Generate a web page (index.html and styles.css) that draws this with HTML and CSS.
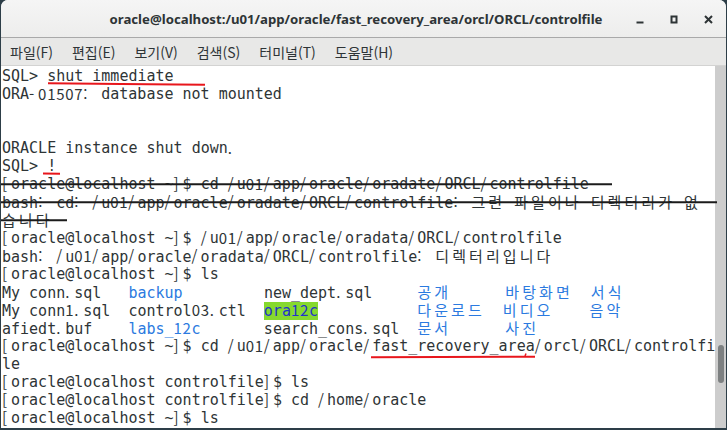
FILE: index.html
```html
<!DOCTYPE html>
<html lang="ko">
<head>
<meta charset="utf-8">
<title>oracle@localhost</title>
<link rel="stylesheet" href="styles.css">
</head>
<body>
<div class="window">
  <div class="titlebar">
    <div class="title">oracle@localhost:/u01/app/oracle/fast_recovery_area/orcl/ORCL/controlfile</div>
    <div class="controls">
      <div class="ctl"><svg width="16" height="16" viewBox="0 0 16 16"><rect x="4.5" y="10.5" width="7" height="2" fill="#2e3436"/></svg></div>
      <div class="ctl"><svg width="16" height="16" viewBox="0 0 16 16"><rect x="5.5" y="5.5" width="5" height="6" fill="none" stroke="#2e3436" stroke-width="2"/></svg></div>
      <div class="ctl"><svg width="16" height="16" viewBox="0 0 16 16"><path d="M5 5 L12 12 M12 5 L5 12" stroke="#2e3436" stroke-width="2" fill="none"/></svg></div>
    </div>
  </div>
  <div class="menubar">
    <span class="menu">파일(F)</span>
    <span class="menu">편집(E)</span>
    <span class="menu">보기(V)</span>
    <span class="menu">검색(S)</span>
    <span class="menu">터미널(T)</span>
    <span class="menu">도움말(H)</span>
  </div>
  <div class="main">
    <div class="term">
      <div class="line">SQL&gt; shut immediate</div>
      <div class="line">ORA<span class="c">-</span><span class="c">0</span><span class="c">1</span><span class="c">5</span><span class="c">0</span><span class="c">7</span><span class="c">:</span> database not mounted</div>
      <div class="line"></div>
      <div class="line"></div>
      <div class="line">ORACLE instance shut down<span class="c">.</span></div>
      <div class="line">SQL&gt; !</div>
      <div class="line"><span class="c">[</span>oracle@localhost ~<span class="c">]</span>$ cd <span class="c">/</span>u<span class="c">0</span><span class="c">1</span><span class="c">/</span>app<span class="c">/</span>oracle<span class="c">/</span>oradate<span class="c">/</span>ORCL<span class="c">/</span>controlfile</div>
      <div class="line">bash<span class="c">:</span> cd<span class="c">:</span> <span class="c">/</span>u<span class="c">0</span><span class="c">1</span><span class="c">/</span>app<span class="c">/</span>oracle<span class="c">/</span>oradate<span class="c">/</span>ORCL<span class="c">/</span>controlfile<span class="c">:</span> <span class="k">그런</span> <span class="k">파일이나</span> <span class="k">디렉터리가</span> <span class="k">없</span></div>
      <div class="line"><span class="k">습니다</span></div>
      <div class="line"><span class="c">[</span>oracle@localhost ~<span class="c">]</span>$ <span class="c">/</span>u<span class="c">0</span><span class="c">1</span><span class="c">/</span>app<span class="c">/</span>oracle<span class="c">/</span>oradata<span class="c">/</span>ORCL<span class="c">/</span>controlfile</div>
      <div class="line">bash<span class="c">:</span> <span class="c">/</span>u<span class="c">0</span><span class="c">1</span><span class="c">/</span>app<span class="c">/</span>oracle<span class="c">/</span>oradata<span class="c">/</span>ORCL<span class="c">/</span>controlfile<span class="c">:</span> <span class="k">디렉터리입니다</span></div>
      <div class="line"><span class="c">[</span>oracle@localhost ~<span class="c">]</span>$ ls</div>
      <div class="line">My conn<span class="c">.</span>sql   <span class="dir">backup</span>         new_dept<span class="c">.</span>sql     <span class="dir k">공개</span>      <span class="dir k">바탕화면</span>  <span class="dir k">서식</span></div>
      <div class="line">My conn<span class="c">1</span><span class="c">.</span>sql  control<span class="c">0</span><span class="c">3</span><span class="c">.</span>ctl  <span class="ow">ora<span class="c">1</span><span class="c">2</span>c</span>           <span class="dir k">다운로드</span>  <span class="dir k">비디오</span>    <span class="dir k">음악</span></div>
      <div class="line">afiedt<span class="c">.</span>buf    <span class="dir">labs_<span class="c">1</span><span class="c">2</span>c</span>       search_cons<span class="c">.</span>sql  <span class="dir k">문서</span>      <span class="dir k">사진</span></div>
      <div class="line"><span class="c">[</span>oracle@localhost ~<span class="c">]</span>$ cd <span class="c">/</span>u<span class="c">0</span><span class="c">1</span><span class="c">/</span>app<span class="c">/</span>oracle<span class="c">/</span>fast_recovery_area<span class="c">/</span>orcl<span class="c">/</span>ORCL<span class="c">/</span>controlfi</div>
      <div class="line">le</div>
      <div class="line"><span class="c">[</span>oracle@localhost controlfile<span class="c">]</span>$ ls</div>
      <div class="line"><span class="c">[</span>oracle@localhost controlfile<span class="c">]</span>$ cd <span class="c">/</span>home<span class="c">/</span>oracle</div>
      <div class="line"><span class="c">[</span>oracle@localhost ~<span class="c">]</span>$ ls</div>
      <svg class="marks" width="713" height="362" viewBox="0 0 713 362">
        <path d="M47 17.3 L120 18 L204 18.8" stroke="#e8161c" stroke-width="2" fill="none"/>
        <path d="M42 107.5 L59 107.8" stroke="#e8161c" stroke-width="2" fill="none"/>
        <path d="M370 291.2 L534 290.7" stroke="#e8161c" stroke-width="2" fill="none"/>
        <path d="M524 290 L525 287.5" stroke="#e8161c" stroke-width="1.5" fill="none"/>
        <path d="M0 118.3 L611 118.3" stroke="#1b1b1b" stroke-width="2" fill="none"/>
        <path d="M0 136.3 L716 136.3" stroke="#1b1b1b" stroke-width="2" fill="none"/>
        <path d="M0 154.3 L66 154.3" stroke="#1b1b1b" stroke-width="2" fill="none"/>
      </svg>
    </div>
    <div class="scroll"><div class="thumb"></div></div>
  </div>
</div>
</body>
</html>
```

FILE: styles.css
```css
html, body {
  margin: 0;
  padding: 0;
}
body {
  width: 727px;
  height: 430px;
  overflow: hidden;
  background: #2d3e48;
}
.window {
  margin: 0 1px;
  height: 428px;
  background: #ffffff;
  border-radius: 7px 7px 0 0;
  overflow: hidden;
  display: flex;
  flex-direction: column;
}
.titlebar {
  height: 38px;
  box-sizing: border-box;
  border-bottom: 1px solid #a9a9a9;
  background: linear-gradient(#f5f5f5, #ededec);
  display: flex;
  align-items: center;
  padding-left: 88px;
  flex: none;
}
.title {
  flex: 1;
  text-align: center;
  font: bold 13.2px "Noto Sans", sans-serif;
  color: #2e3436;
  white-space: nowrap;
}
.controls {
  display: flex;
  padding-right: 1px;
}
.ctl {
  width: 34px;
  height: 37px;
  display: flex;
  align-items: center;
  justify-content: center;
}
.menubar {
  height: 28px;
  box-sizing: border-box;
  border-bottom: 1px solid #d3d3d2;
  background: #e8e8e7;
  display: flex;
  align-items: center;
  padding-left: 9px;
  gap: 19px;
  font: 14px "Noto Sans CJK KR", sans-serif;
  color: #2e3436;
  flex: none;
}
.main {
  flex: 1;
  display: flex;
}
.term {
  flex: 1;
  position: relative;
  padding: 1px 0 0 1px;
  font: 15px "DejaVu Sans Mono", monospace;
  color: #2e3436;
}
.line {
  height: 18px;
  line-height: 18px;
  white-space: pre;
}
.c {
  display: inline-block;
  width: 9.03px;
  font-family: "Noto Sans CJK KR", sans-serif;
  line-height: 18px;
  vertical-align: top;
}
.k {
  font-family: "Noto Sans CJK KR", sans-serif;
  letter-spacing: 3.06px;
}
.dir {
  color: #2b7ae0;
}
.ow {
  background: #86d92e;
  color: #2233cc;
}
.marks {
  position: absolute;
  left: 0;
  top: 0;
  overflow: visible;
}
.scroll {
  width: 12px;
  background: #cdcdcd;
  padding-top: 279px;
  box-sizing: border-box;
  display: flex;
  justify-content: center;
}
.thumb {
  width: 6px;
  height: 38px;
  border-radius: 3px;
  background: #7d8081;
}
```
